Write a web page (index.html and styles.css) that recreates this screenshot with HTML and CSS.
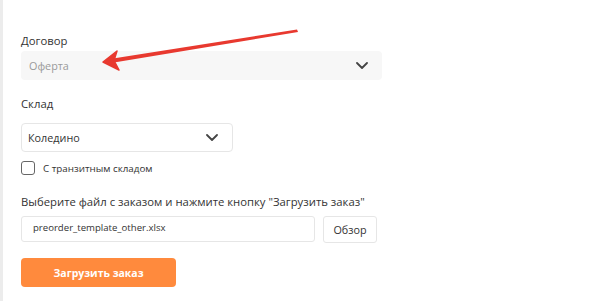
FILE: index.html
```html
<!DOCTYPE html>
<html lang="ru">
<head>
    <meta charset="UTF-8">
    <meta name="viewport" content="width=device-width, initial-scale=1.0">
    <title>Загрузка заказа</title>
    <link rel="stylesheet" href="styles.css">
</head>
<body>
    <div class="page">
        <form class="order-form">
            <div class="form-group">
                <label class="field-label">Договор</label>
                <div class="select select-disabled">
                    <span class="select-value">Оферта</span>
                    <svg class="chevron" width="12" height="7" viewBox="0 0 12 7"><path d="M1 1l5 5 5-5" fill="none" stroke="#444" stroke-width="1.8" stroke-linecap="round" stroke-linejoin="round"/></svg>
                </div>
            </div>

            <div class="form-group">
                <label class="field-label label-spaced">Склад</label>
                <div class="select select-warehouse">
                    <span class="select-value">Коледино</span>
                    <svg class="chevron" width="12" height="7" viewBox="0 0 12 7"><path d="M1 1l5 5 5-5" fill="none" stroke="#444" stroke-width="1.8" stroke-linecap="round" stroke-linejoin="round"/></svg>
                </div>
                <label class="checkbox-row">
                    <span class="checkbox"></span>
                    <span class="checkbox-text">С транзитным складом</span>
                </label>
            </div>

            <div class="form-group">
                <label class="field-label label-file">Выберите файл с заказом и нажмите кнопку "Загрузить заказ"</label>
                <div class="file-row">
                    <div class="file-name">preorder_template_other.xlsx</div>
                    <button type="button" class="btn-browse">Обзор</button>
                </div>
            </div>

            <button type="button" class="btn-upload">Загрузить заказ</button>
        </form>

        <!-- annotation arrow drawn over the form -->
        <svg class="arrow" width="600" height="100" viewBox="0 0 600 100">
            <path d="M297 29.5 L298 32 L114 62.5 L113 58.5 Z" fill="#e8392f"/>
            <path d="M103 62 L117 51 L114 60.5 L119 70 Z" fill="#e8392f" stroke="#e8392f" stroke-width="1.5" stroke-linejoin="round"/>
        </svg>
    </div>
</body>
</html>
```

FILE: styles.css
```css
:root {
    --text-color: #333;
    --muted-text: #9a9a9a;
    --border-color: #e6e6e6;
    --accent-color: #ff8a3d;
}

* {
    margin: 0;
    padding: 0;
    box-sizing: border-box;
}

body {
    font-family: "Open Sans", Arial, sans-serif;
    font-size: 11.3px;
    color: var(--text-color);
    background-color: #fff;
}

.page {
    position: relative;
    min-height: 301px;
    border-left: 3px solid #ececec;
}

.order-form {
    padding: 32px 0 0 18px;
}

.field-label {
    display: block;
    line-height: 18px;
    margin-bottom: 1px;
}

.label-spaced {
    margin-top: 15px;
    margin-bottom: 10px;
}

.label-file {
    margin-top: 18px;
    margin-bottom: 5px;
}

.select {
    display: flex;
    align-items: center;
    justify-content: space-between;
    height: 29px;
    padding: 0 14px 0 8px;
    border-radius: 4px;
    font-size: 10.8px;
}

.select-disabled {
    width: 361px;
    background-color: #f7f7f7;
    color: var(--muted-text);
}

.select-warehouse {
    width: 212px;
    padding-left: 6px;
    border: 1px solid var(--border-color);
}

.select-value {
    line-height: 18px;
}

.checkbox-row {
    display: flex;
    align-items: center;
    gap: 8px;
    margin-top: 9px;
    height: 14px;
    font-size: 9.8px;
}

.checkbox {
    width: 14px;
    height: 14px;
    border: 1.5px solid #666;
    border-radius: 3px;
}

.file-row {
    display: flex;
    gap: 8px;
}

.file-name {
    width: 294px;
    height: 26px;
    line-height: 22px;
    padding-left: 11px;
    font-size: 9.6px;
    border: 1px solid var(--border-color);
    border-radius: 3px;
}

.btn-browse {
    width: 54px;
    height: 27px;
    font-family: inherit;
    font-size: 10.8px;
    color: var(--text-color);
    background-color: #fff;
    border: 1px solid var(--border-color);
    border-radius: 3px;
}

.btn-upload {
    display: block;
    width: 155px;
    height: 29px;
    margin-top: 15px;
    font-family: inherit;
    font-size: 10.5px;
    font-weight: 700;
    color: #fff;
    background-color: var(--accent-color);
    border: none;
    border-radius: 4px;
}

.arrow {
    position: absolute;
    top: 0;
    left: -3px;
    pointer-events: none;
}
```
